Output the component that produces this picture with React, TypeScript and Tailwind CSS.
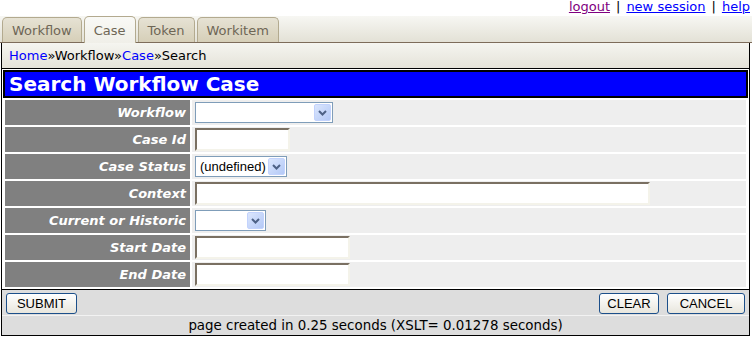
import React from "react";

const rows: { label: string; kind: "select" | "input"; w: string; value?: string }[] = [
  { label: "Workflow", kind: "select", w: "w-[138px]" },
  { label: "Case Id", kind: "input", w: "w-[95px]" },
  { label: "Case Status", kind: "select", w: "w-[92px]", value: "(undefined)" },
  { label: "Context", kind: "input", w: "w-[455px]" },
  { label: "Current or Historic", kind: "select", w: "w-[71px]" },
  { label: "Start Date", kind: "input", w: "w-[155px]" },
  { label: "End Date", kind: "input", w: "w-[155px]" },
];

function Chevron() {
  return (
    <svg width="9" height="6" viewBox="0 0 9 6">
      <path d="M1 1 L4.5 4.5 L8 1" fill="none" stroke="#4d6185" strokeWidth="2" />
    </svg>
  );
}

function FakeSelect({ w, value }: { w: string; value?: string }) {
  return (
    <div className={`${w} h-[21px] border border-[#7f9db9] bg-white flex items-center justify-between`}>
      <span className="pl-[4px] text-[13px] text-black font-['Liberation_Sans',Arial,sans-serif]">
        {value}
      </span>
      <span className="mr-[1px] w-[17px] h-[17px] rounded-[2px] bg-gradient-to-br from-[#dbe6fd] to-[#b4c9f6] border border-[#c3d3fd] flex items-center justify-center">
        <Chevron />
      </span>
    </div>
  );
}

function FakeInput({ w }: { w: string }) {
  return (
    <div
      className={`${w} h-[23px] bg-white border-2 border-t-[#7a7062] border-l-[#7a7062] border-b-[#f4f3ea] border-r-[#f4f3ea]`}
    />
  );
}

function Tab({ label, active }: { label: string; active?: boolean }) {
  return (
    <div
      className={`px-[9px] pt-[2px] rounded-t-[5px] border border-b-0 border-[#b3aa8f] text-[13px] text-[#6e6656] flex items-center ${
        active
          ? "h-[27px] mb-[-1px] bg-gradient-to-b from-[#f9f9f6] to-[#f0efe8] relative z-10"
          : "h-[25px] bg-gradient-to-b from-[#e6e2d4] to-[#d6cfb8]"
      }`}
    >
      {label}
    </div>
  );
}

function Btn({ children, w }: { children: React.ReactNode; w: string }) {
  return (
    <button
      className={`${w} h-[21px] rounded-[3px] border border-[#1c4f8a] bg-gradient-to-b from-white to-[#e8e6dd] text-[13px] text-black font-['Liberation_Sans',Arial,sans-serif] leading-none`}
    >
      {children}
    </button>
  );
}

export default function App() {
  return (
    <div className="w-[752px] h-[337px] bg-white font-['DejaVu_Sans',Verdana,sans-serif] overflow-hidden">
      {/* top links */}
      <div className="h-[16px] flex justify-end items-start pr-[2px] text-[13px] leading-[14px] gap-[6px]">
        <a className="text-[#800080] underline">logout</a>
        <span>|</span>
        <a className="text-[#0000ff] underline">new session</a>
        <span>|</span>
        <a className="text-[#0000ff] underline">help</a>
      </div>

      {/* tab bar */}
      <div className="h-[27px] flex items-end gap-[2px] pl-[2px] bg-gradient-to-b from-[#f7f7f3] to-[#e3e1d6] border-b border-[#7d6c5a]">
        <Tab label="Workflow" />
        <Tab label="Case" active />
        <Tab label="Token" />
        <Tab label="Workitem" />
      </div>

      {/* main box */}
      <div className="ml-[1px] mr-[2px] border-x border-b border-black">
        <div className="h-[26px] flex items-center pl-[7px] text-[13px] bg-gradient-to-b from-[#f5f5f0] to-[#e5e3d9] border-b border-black">
          <span className="text-[#0000ff]">Home</span>
          <span>»Workflow»</span>
          <span className="text-[#0000ff]">Case</span>
          <span>»Search</span>
        </div>

        <div className="px-[1px] pt-[1px]">
          <div className="h-[28px] border-2 border-black bg-[#0000ff] flex items-center pl-[4px] text-white font-bold text-[20px] leading-none">
            Search Workflow Case
          </div>
          <table className="w-full border-separate border-spacing-[2px]">
            <tbody>
              {rows.map((r) => (
                <tr key={r.label} className="h-[25px]">
                  <td className="w-[185px] bg-[#808080] text-right pr-[4px] text-white font-bold italic text-[13px] p-0">
                    {r.label}
                  </td>
                  <td className="bg-[#eeeeee] p-0 pl-[3px]">
                    {r.kind === "select" ? (
                      <FakeSelect w={r.w} value={r.value} />
                    ) : (
                      <FakeInput w={r.w} />
                    )}
                  </td>
                </tr>
              ))}
            </tbody>
          </table>
        </div>

        <div className="border-t border-black bg-[#dddddd] h-[26px] flex items-center px-[4px] pt-[1px]">
          <Btn w="w-[71px]">SUBMIT</Btn>
          <div className="flex-1" />
          <div className="flex gap-[8px]">
            <Btn w="w-[60px]">CLEAR</Btn>
            <Btn w="w-[78px]">CANCEL</Btn>
          </div>
        </div>
        <div className="h-[20px] border-t border-[#f2f2f2] bg-[#dddddd] text-center text-[13.4px] leading-[20px]">
          page created in 0.25 seconds (XSLT= 0.01278 seconds)
        </div>
      </div>
    </div>
  );
}
